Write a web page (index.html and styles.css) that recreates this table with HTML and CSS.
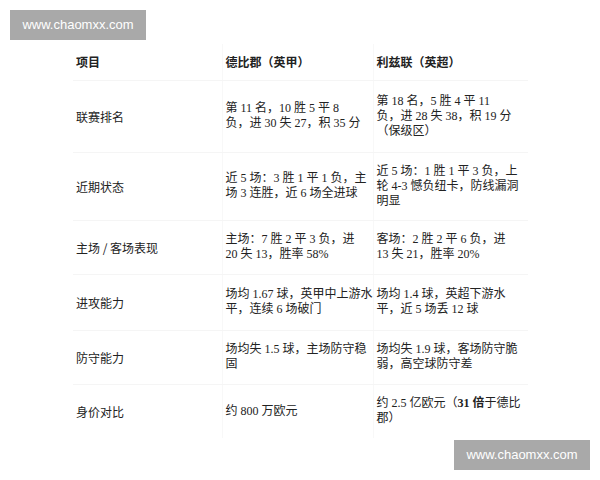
FILE: index.html
```html
<!DOCTYPE html>
<html lang="zh">
<head>
<meta charset="utf-8">
<link rel="stylesheet" href="styles.css">
</head>
<body>
<div class="page">
  <div class="mark">www.chaomxx.com</div>
  <table class="compare">
    <colgroup>
      <col class="c1"><col class="c2"><col class="c3">
    </colgroup>
    <thead>
      <tr class="r-head"><th>项目</th><th>德比郡（英甲）</th><th>利兹联（英超）</th></tr>
    </thead>
    <tbody>
      <tr class="r1"><td class="label">联赛排名</td><td>第 11 名，10 胜 5 平 8<br>负，进 30 失 27，积 35 分</td><td>第 18 名，5 胜 4 平 11<br>负，进 28 失 38，积 19 分<br>（保级区）</td></tr>
      <tr class="r2"><td class="label">近期状态</td><td>近 5 场：3 胜 1 平 1 负，主<br>场 3 连胜，近 6 场全进球</td><td>近 5 场：1 胜 1 平 3 负，上<br>轮 4-3 憾负纽卡，防线漏洞<br>明显</td></tr>
      <tr class="r3"><td class="label">主场 / 客场表现</td><td>主场：7 胜 2 平 3 负，进<br>20 失 13，胜率 58%</td><td>客场：2 胜 2 平 6 负，进<br>13 失 21，胜率 20%</td></tr>
      <tr class="r4"><td class="label">进攻能力</td><td>场均 1.67 球，英甲中上游水<br>平，连续 6 场破门</td><td>场均 1.4 球，英超下游水<br>平，近 5 场丢 12 球</td></tr>
      <tr class="r5"><td class="label">防守能力</td><td>场均失 1.5 球，主场防守稳<br>固</td><td>场均失 1.9 球，客场防守脆<br>弱，高空球防守差</td></tr>
      <tr class="r6"><td class="label">身价对比</td><td>约 800 万欧元</td><td>约 2.5 亿欧元（<b>31 倍</b>于德比<br>郡）</td></tr>
    </tbody>
  </table>
  <div class="mark mark-br">www.chaomxx.com</div>
</div>
</body>
</html>
```

FILE: styles.css
```css
html, body {
  margin: 0;
  padding: 0;
  background: #ffffff;
}
.page {
  position: relative;
  width: 600px;
  height: 480px;
  padding: 10px 0 0 10px;
  box-sizing: border-box;
}
.mark {
  width: 136px;
  height: 30px;
  background: #a9a9a9;
  color: #ffffff;
  font: 13px/30px "Liberation Sans", Arial, sans-serif;
  text-align: center;
}
.mark-br {
  position: absolute;
  left: 454px;
  top: 440px;
}
.compare {
  margin: 4px 0 0 63px;
  border-collapse: collapse;
  table-layout: fixed;
  width: 455px;
  color: #222;
  font-size: 12px;
  line-height: 15px;
}
.c1 { width: 149px; }
.c2 { width: 151px; }
.c3 { width: 155px; }
.compare th, .compare td {
  padding: 0 0 0 3px;
  vertical-align: middle;
  text-align: left;
  white-space: nowrap;
  border-bottom: 1px solid #f5f5f5;
  border-left: 1px solid #f8f8f8;
}
.compare th:first-child, .compare td:first-child { border-left: none; }
.compare th {
  font-family: "Noto Sans CJK SC", sans-serif;
  font-weight: bold;
}
.compare td {
  font-family: "Liberation Serif", "Noto Sans CJK SC", serif;
}
.compare td.label {
  font-family: "Noto Sans CJK SC", sans-serif;
}
.compare b { font-weight: bold; }
.r-head { height: 36px; }
.r1 { height: 72px; }
.r2 { height: 68px; }
.r3 { height: 54px; }
.r4 { height: 56px; }
.r5 { height: 54px; }
.r6 { height: 54px; }
.r6 td { border-bottom: none; }
```
